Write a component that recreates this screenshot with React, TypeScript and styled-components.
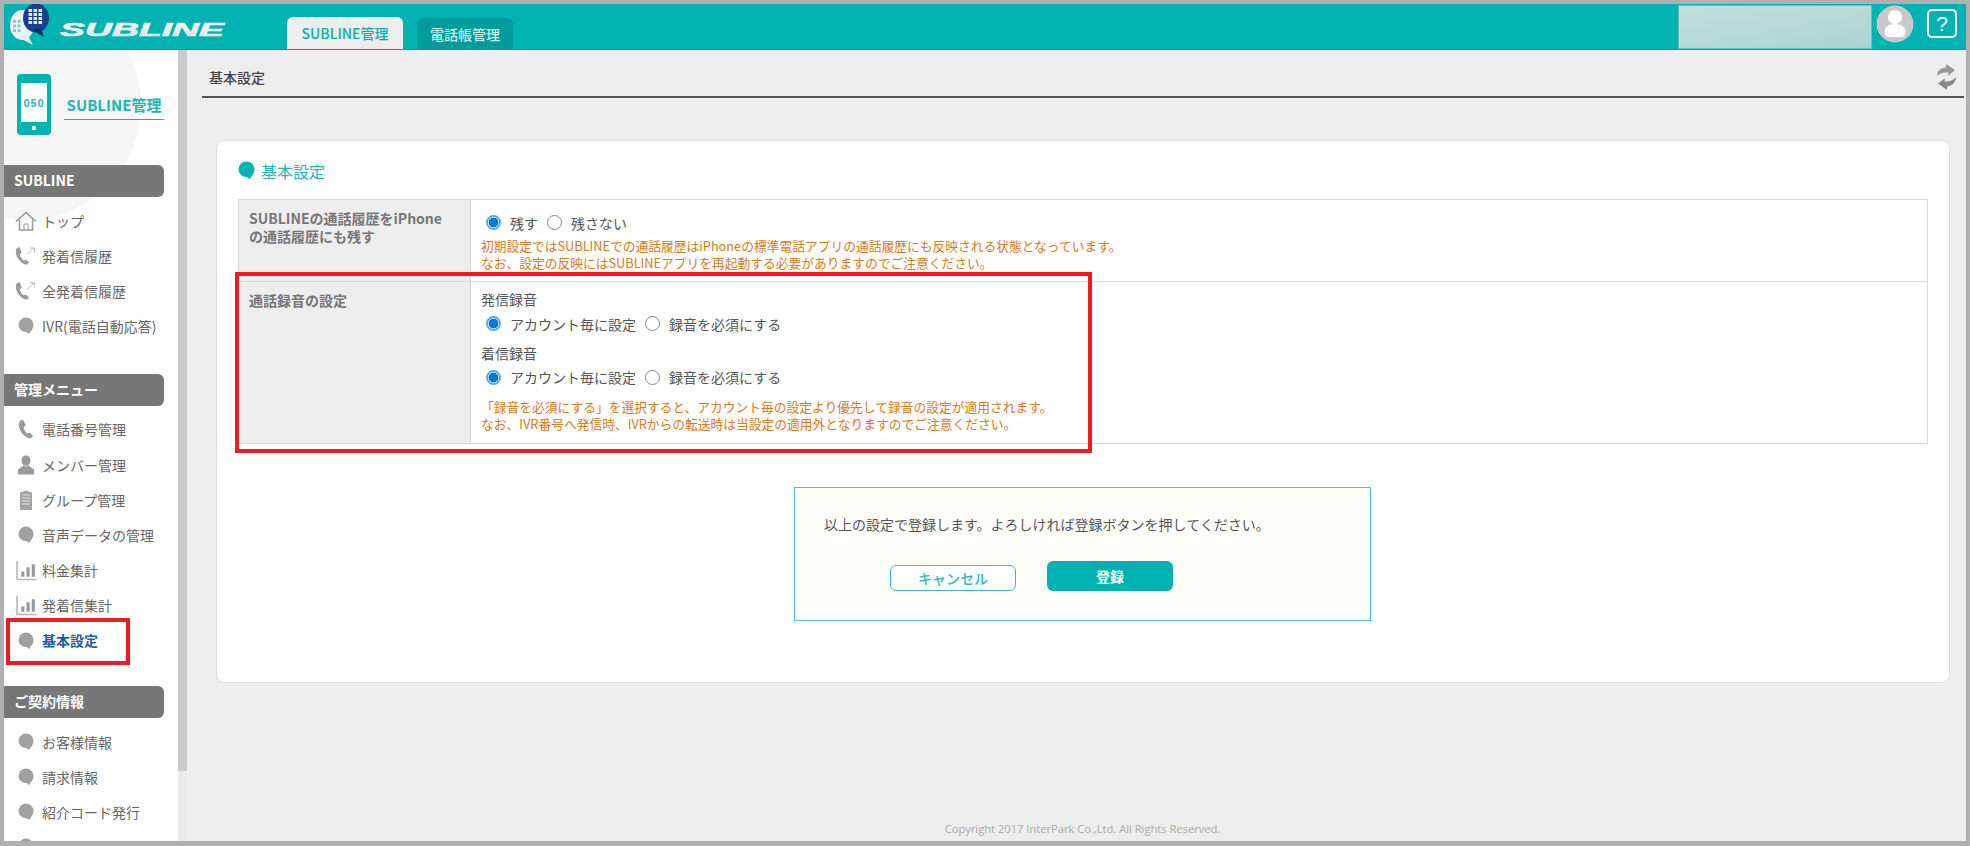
import React from 'react'
import styled, { createGlobalStyle } from 'styled-components'

const teal = '#00b2b2'
const FONT = `"Noto Sans CJK JP", "Open Sans", sans-serif`

const Global = createGlobalStyle`
  html, body { margin: 0; padding: 0; height: 100%; background: #b0b0b0; }
  body { font-family: ${FONT}; color: #555; overflow: hidden; }
  * { box-sizing: border-box; }
`

const Frame = styled.div`
  position: relative;
  width: 1970px;
  height: 846px;
  padding: 4px 4px 5px 4px;
  background: #b0b0b0;
`
const Page = styled.div`
  width: 100%;
  height: 100%;
  display: flex;
  flex-direction: column;
  background: #eee;
  overflow: hidden;
`
const Header = styled.header`
  height: 46px;
  flex: none;
  display: flex;
  background: ${teal};
  border-bottom: 1px solid #00a0a0;
`
const LogoWrap = styled.div`
  width: 283px;
  flex: none;
  display: flex;
`
const Tabs = styled.nav`
  display: flex;
  gap: 14px;
  align-items: flex-end;
  flex: 1;
`
const Tab = styled.div<{ $active?: boolean }>`
  height: ${p => (p.$active ? '32px' : '31px')};
  width: ${p => (p.$active ? '116px' : '96px')};
  border-radius: 6px 6px 0 0;
  display: flex;
  align-items: center;
  justify-content: center;
  font-size: 14px;
  font-weight: 500;
  background: ${p => (p.$active ? '#eee' : '#009c9c')};
  color: ${p => (p.$active ? teal : '#c8f0ee')};
`
const UserBox = styled.div`
  width: 194px;
  margin-top: 1px;
  background: linear-gradient(170deg, #c0dfdd, #aed3d2);
  border: 1px solid #5cc4c4;
`
const Avatar = styled.div`
  margin: 1px 0 0 4px;
  display: flex;
`
const Help = styled.div`
  width: 30px;
  height: 29px;
  margin: 5px 9px 0 13px;
  border: 2px solid #fff;
  border-radius: 5px;
  color: #fff;
  font: 21px "Liberation Sans", sans-serif;
  display: flex;
  align-items: center;
  justify-content: center;
`
const Body = styled.div`
  flex: 1;
  min-height: 0;
  display: flex;
`
const Sidebar = styled.aside`
  width: 174px;
  flex: none;
  background: #fff;
  position: relative;
  overflow: hidden;
`
const SideGlow = styled.div`
  position: absolute;
  left: -93px;
  top: -60px;
  width: 230px;
  height: 230px;
  border-radius: 50%;
  background: #f6f6f6;
`
const SideInner = styled.div`
  position: relative;
`
const Brand = styled.div`
  height: 115px;
  padding: 24px 0 0 13px;
  display: flex;
`
const BrandName = styled.div`
  margin: 21px 0 0 13px;
  width: 100px;
  height: 25px;
  border-bottom: 1px solid #00b8b8;
  font-size: 15px;
  font-weight: 700;
  color: #1cb6b6;
  text-align: center;
  line-height: 20px;
  white-space: nowrap;
`
const SectionBar = styled.div<{ $top?: number }>`
  width: 160px;
  height: 32px;
  margin-top: ${p => p.$top ?? 0}px;
  padding-left: 10px;
  border-radius: 0 6px 6px 0;
  background: #777;
  color: #fff;
  font-size: 14px;
  font-weight: 700;
  line-height: 30px;
`
const MenuList = styled.ul`
  list-style: none;
  margin: 6px 0 0;
  padding: 0;
`
const MenuRow = styled.li<{ $current?: boolean }>`
  height: 35.200px;
  display: flex;
  align-items: center;
  font-size: 14px;
  color: ${p => (p.$current ? '#1b5fa8' : '#666')};
  font-weight: ${p => (p.$current ? 700 : 400)};
  white-space: nowrap;
  position: relative;
`
const MenuIcon = styled.span`
  width: 38px;
  flex: none;
  display: flex;
  justify-content: center;
  padding-left: 6px;
`
const Marker = styled.div`
  position: absolute;
  left: 2px;
  top: -5px;
  width: 124px;
  height: 47px;
  border: 4px solid #ed1c24;
`
const Scrollbar = styled.div`
  width: 9px;
  flex: none;
  background: #ececec;
`
const Thumb = styled.div`
  height: 721px;
  background: #ccc;
`
const Main = styled.main`
  flex: 1;
  min-width: 0;
  display: flex;
  flex-direction: column;
  padding-left: 15px;
`
const TitleRow = styled.div`
  height: 48px;
  flex: none;
  display: flex;
  align-items: center;
  justify-content: space-between;
  padding: 8px 7px 0 7px;
  margin-right: 2px;
  border-bottom: 2px solid #555;
  font-size: 14px;
  font-weight: 500;
  color: #444;
`
const Card = styled.section`
  width: 1734px;
  height: 543px;
  flex: none;
  margin-top: 42px;
  margin-left: 14px;
  padding: 19px 21px 0 21px;
  background: #fff;
  border: 1px solid #ddd;
  border-radius: 8px;
`
const CardTitle = styled.h2`
  margin: 0 0 18px;
  height: 21px;
  display: flex;
  align-items: center;
  gap: 6px;
  font-size: 16px;
  font-weight: 400;
  color: #1fb5b5;
`
const SettingsTable = styled.table`
  width: 1690px;
  border-collapse: collapse;
  table-layout: fixed;
  font-size: 14px;
  & th, & td { border: 1px solid #d8d8d8; vertical-align: top; }
`
const Th = styled.th`
  width: 232px;
  padding: 9px 10px;
  background: #eee;
  color: #777;
  text-align: left;
  font-size: 14px;
  line-height: 18px;
  font-weight: 700;
`
const Td = styled.td<{ $h: number; $top: number }>`
  height: ${p => p.$h}px;
  padding: ${p => p.$top}px 10px 0;
  color: #555;
  line-height: 18px;
  font-size: 14px;
`
const Note = styled.p<{ $top?: number }>`
  margin: ${p => p.$top ?? 0}px 0 0;
  color: #d97a20;
  font-size: 12.750px;
  line-height: 17px;
  white-space: nowrap;
`
const RadioRow = styled.div`
  display: flex;
  align-items: center;
  height: 22px;
  padding-left: 5px;
  margin-top: 4.500px;
`
const Radio = styled.input.attrs({ type: 'radio' })`
  appearance: none;
  width: 15px;
  height: 15px;
  margin: 0 9px 0 0;
  border-radius: 50%;
  border: 1.500px solid #888;
  background: #fff;
  &:checked {
    border: 2px solid #5aa9e6;
    background: radial-gradient(circle, #0078d7 0 4.600px, #fff 5.200px);
  }
`
const RadioLabel = styled.label`
  font-size: 14px;
  margin-right: 9px;
`
const GroupLabel = styled.div<{ $top?: number }>`
  margin-top: ${p => p.$top ?? 0}px;
`
const Confirm = styled.div`
  width: 577px;
  height: 134px;
  margin: 43px 0 0 556px;
  padding: 26px 29px 0;
  background: #fffef8;
  border: 1px solid #43c8c8;
  font-size: 14px;
  line-height: 20px;
`
const Buttons = styled.div`
  display: flex;
  align-items: flex-end;
  gap: 31px;
  margin: 27px 0 0 66px;
`
const CancelButton = styled.button`
  width: 126px;
  height: 26px;
  padding: 0;
  border: 1px solid #3bbcbc;
  border-radius: 6px;
  background: #fff;
  color: #2fb8b8;
  font: 500 14px ${FONT};
`
const SubmitButton = styled.button`
  width: 126px;
  height: 30px;
  padding: 0;
  border: none;
  border-radius: 6px;
  background: ${teal};
  color: #fff;
  font: 700 14px ${FONT};
`
const Copyright = styled.footer`
  margin-top: auto;
  height: 24px;
  text-align: center;
  font: 11.150px/24px "Open Sans", sans-serif;
  color: #aaa;
  padding-right: 3px;
`
const TableMarker = styled.div`
  position: absolute;
  left: 235px;
  top: 272px;
  width: 857px;
  height: 181px;
  border: 4px solid #ed1c24;
  pointer-events: none;
`

const Bubble = ({ color = '#a0a0a0', size = 16 }: { color?: string; size?: number }) => (
  <svg width={size} height={size * 1.12} viewBox="0 0 16 18">
    <path d="M8 0.5a7.6 7.6 0 0 1 7.6 7.5c0 3.6-2.4 6.3-4.9 9.4-.5-1.2-1.4-2-2.9-2.2A7.4 7.4 0 0 1 .4 8 7.6 7.6 0 0 1 8 .5z" fill={color} />
  </svg>
)

const Home = () => (
  <svg width="22" height="20" viewBox="0 0 22 20" fill="none" stroke="#999" strokeWidth="1.5">
    <path d="M1 10.5 11 1.5l10 9" />
    <path d="M4.500 8.500V19h13V8.500" />
    <path d="M9 19v-6h4v6" strokeWidth="1" />
  </svg>
)

const Calls = () => (
  <svg width="22" height="20" viewBox="0 0 22 20">
    <path d="M4.500 1 1.500 2.600C0 6 1 10 3.800 13.500c2.400 3 5 5 8 5.300l2.200-2.400-3.300-3-1.800 1C6.800 13.500 5 10.500 4.800 8l2-1.300z" fill="#9a9a9a" />
    <path d="M12 8.500 19 2M15 2h4.500v4.500" fill="none" stroke="#bbb" strokeWidth="1" />
  </svg>
)

const Phone = () => (
  <svg width="16" height="20" viewBox="0 0 16 20">
    <path d="M5 .5 1.500 2.200C.2 6.500 1 10.500 3.800 14c2.500 3.300 5.700 5.300 9 5.500l2.400-2.700-3.700-3.300-2 1.200C7.500 13.500 6 10.500 5.600 8l2.300-1.400z" fill="#9a9a9a" />
  </svg>
)

const Person = () => (
  <svg width="18" height="20" viewBox="0 0 18 20">
    <ellipse cx="9" cy="5.500" rx="4.500" ry="5.300" fill="#9a9a9a" />
    <path d="M6.500 10.500 1 14.500V19.500h16v-5l-5.500-4c-1.500 1.200-3.500 1.200-5 0z" fill="#9a9a9a" />
  </svg>
)

const Building = () => (
  <svg width="14" height="20" viewBox="0 0 14 20">
    <path d="M1 2.500 7 .5l6 2V20H1z" fill="#a5a5a5" />
    <path d="M3 5h8M3 8h8M3 11h8M3 14h8" stroke="#e4e4e4" strokeWidth="1" />
  </svg>
)

const Bars = () => (
  <svg width="21" height="21" viewBox="0 0 20 20">
    <path d="M1 1v17.500h18.500" fill="none" stroke="#b5b5b5" strokeWidth="1.500" />
    <path d="M5 11h3v5H5zM10 7h3v9h-3zM15 4h3v12h-3z" fill="#999" />
  </svg>
)

const PhoneBrand = () => (
  <svg width="34" height="61" viewBox="0 0 34 61">
    <rect x="0" y="0" width="34" height="61" rx="4" fill="#00b2b2" />
    <rect x="4" y="9" width="26" height="39" fill="#fff" />
    <circle cx="17" cy="54" r="2.200" fill="#fff" />
    <text x="17" y="33" textAnchor="middle" fontSize="11" letterSpacing="0.8" fontWeight="700" fill="#20b8b8" fontFamily="Liberation Sans">050</text>
  </svg>
)

const Logo = () => (
  <svg width="230" height="46" viewBox="0 0 230 46">
    <defs>
      <linearGradient id="logoText" x1="0" y1="0" x2="0" y2="1">
        <stop offset="0" stopColor="#ffffff" />
        <stop offset="1" stopColor="#d4dcdc" />
      </linearGradient>
    </defs>
    <ellipse cx="18" cy="21" rx="12" ry="15" fill="#eef3f3" />
    <path d="M14 33 29 41 23 30z" fill="#e4ecec" />
    <g fill="#8fc8c8">
      {[0, 1, 2].map(r => [0, 1].map(c => (
        <rect key={`w${r}${c}`} x={9 + c * 4.500} y={16 + r * 4.500} width="3" height="3" />
      )))}
    </g>
    <ellipse cx="32" cy="14" rx="13" ry="14.500" fill="#1a3f8f" />
    <path d="M28 26 40 33 37 24z" fill="#123070" />
    <g fill="#dfe9f7">
      {[0, 1, 2, 3].map(r => [0, 1, 2].map(c => (
        <rect key={`b${r}${c}`} x={24.500 + c * 5} y={5 + r * 4} width="3.600" height="3" />
      )))}
    </g>
    <text x="56" y="32" fontFamily="Liberation Sans" fontWeight="700" fontStyle="italic" fontSize="18" fill="url(#logoText)" stroke="#eef3f3" strokeWidth="0.600" textLength="164" lengthAdjust="spacingAndGlyphs">SUBLINE</text>
  </svg>
)

const AvatarIcon = () => (
  <svg width="38" height="38" viewBox="0 0 38 38">
    <circle cx="19" cy="19" r="18.500" fill="#c9c9c9" />
    <circle cx="19" cy="12" r="7" fill="#fff" />
    <path d="M8.500 27c0-5 4-8 10.500-8s10.500 3 10.500 8c0 3-2 5-4 5H12.500c-2 0-4-2-4-5z" fill="#fff" />
  </svg>
)

const Refresh = () => (
  <svg width="21" height="26" viewBox="0 0 21 26">
    <path d="M1 12C1 7 5 3.500 10 3.500V0l9 6-7 6 .5-3.500C8 8 4 9 1 12z" fill="#999" />
    <path d="M20 13c0 5-4 9-9 9.500V26l-9-6.500L9 14l-.5 3.500c4.500.5 8.500-1 11.500-4.500z" fill="#8a8a8a" />
  </svg>
)

type Item = { label: string; icon: React.ReactNode; current?: boolean }

const topMenu: Item[] = [
  { label: 'トップ', icon: <Home /> },
  { label: '発着信履歴', icon: <Calls /> },
  { label: '全発着信履歴', icon: <Calls /> },
  { label: 'IVR(電話自動応答)', icon: <Bubble /> },
]
const adminMenu: Item[] = [
  { label: '電話番号管理', icon: <Phone /> },
  { label: 'メンバー管理', icon: <Person /> },
  { label: 'グループ管理', icon: <Building /> },
  { label: '音声データの管理', icon: <Bubble /> },
  { label: '料金集計', icon: <Bars /> },
  { label: '発着信集計', icon: <Bars /> },
  { label: '基本設定', icon: <Bubble />, current: true },
]
const contractMenu: Item[] = [
  { label: 'お客様情報', icon: <Bubble /> },
  { label: '請求情報', icon: <Bubble /> },
  { label: '紹介コード発行', icon: <Bubble /> },
  { label: '', icon: <Bubble /> },
]

const Menu = ({ items }: { items: Item[] }) => (
  <MenuList>
    {items.map((item, i) => (
      <MenuRow key={i} $current={item.current}>
        <MenuIcon>{item.icon}</MenuIcon>
        {item.label}
        {item.current && <Marker />}
      </MenuRow>
    ))}
  </MenuList>
)

const RecordChoice = ({ name }: { name: string }) => (
  <RadioRow>
    <Radio name={name} defaultChecked />
    <RadioLabel>アカウント毎に設定</RadioLabel>
    <Radio name={name} />
    <RadioLabel>録音を必須にする</RadioLabel>
  </RadioRow>
)

function App() {
  return (
    <Frame>
      <Global />
      <Page>
        <Header>
          <LogoWrap><Logo /></LogoWrap>
          <Tabs>
            <Tab $active>SUBLINE管理</Tab>
            <Tab>電話帳管理</Tab>
          </Tabs>
          <UserBox />
          <Avatar><AvatarIcon /></Avatar>
          <Help>?</Help>
        </Header>
        <Body>
          <Sidebar>
            <SideGlow />
            <SideInner>
              <Brand>
                <PhoneBrand />
                <BrandName>SUBLINE管理</BrandName>
              </Brand>
              <SectionBar>SUBLINE</SectionBar>
              <Menu items={topMenu} />
              <SectionBar $top={30}>管理メニュー</SectionBar>
              <Menu items={adminMenu} />
              <SectionBar $top={28}>ご契約情報</SectionBar>
              <Menu items={contractMenu} />
            </SideInner>
          </Sidebar>
          <Scrollbar><Thumb /></Scrollbar>
          <Main>
            <TitleRow>
              <span>基本設定</span>
              <Refresh />
            </TitleRow>
            <Card>
              <CardTitle><Bubble color="#00b2b2" size={17} />基本設定</CardTitle>
              <SettingsTable>
                <tbody>
                  <tr>
                    <Th>SUBLINEの通話履歴をiPhone<br />の通話履歴にも残す</Th>
                    <Td $h={82} $top={7}>
                      <RadioRow>
                        <Radio name="keep" defaultChecked />
                        <RadioLabel>残す</RadioLabel>
                        <Radio name="keep" />
                        <RadioLabel>残さない</RadioLabel>
                      </RadioRow>
                      <Note $top={3}>初期設定ではSUBLINEでの通話履歴はiPhoneの標準電話アプリの通話履歴にも反映される状態となっています。<br />なお、設定の反映にはSUBLINEアプリを再起動する必要がありますのでご注意ください。</Note>
                    </Td>
                  </tr>
                  <tr>
                    <Th>通話録音の設定</Th>
                    <Td $h={162} $top={8}>
                      <GroupLabel>発信録音</GroupLabel>
                      <RecordChoice name="out" />
                      <GroupLabel $top={9}>着信録音</GroupLabel>
                      <RecordChoice name="in" />
                      <Note $top={10}>「録音を必須にする」を選択すると、アカウント毎の設定より優先して録音の設定が適用されます。<br />なお、IVR番号へ発信時、IVRからの転送時は当設定の適用外となりますのでご注意ください。</Note>
                    </Td>
                  </tr>
                </tbody>
              </SettingsTable>
              <Confirm>
                以上の設定で登録します。よろしければ登録ボタンを押してください。
                <Buttons>
                  <CancelButton>キャンセル</CancelButton>
                  <SubmitButton>登録</SubmitButton>
                </Buttons>
              </Confirm>
            </Card>
            <Copyright>Copyright 2017 InterPark Co.,Ltd. All Rights Reserved.</Copyright>
          </Main>
        </Body>
      </Page>
      <TableMarker />
    </Frame>
  )
}

export default App
